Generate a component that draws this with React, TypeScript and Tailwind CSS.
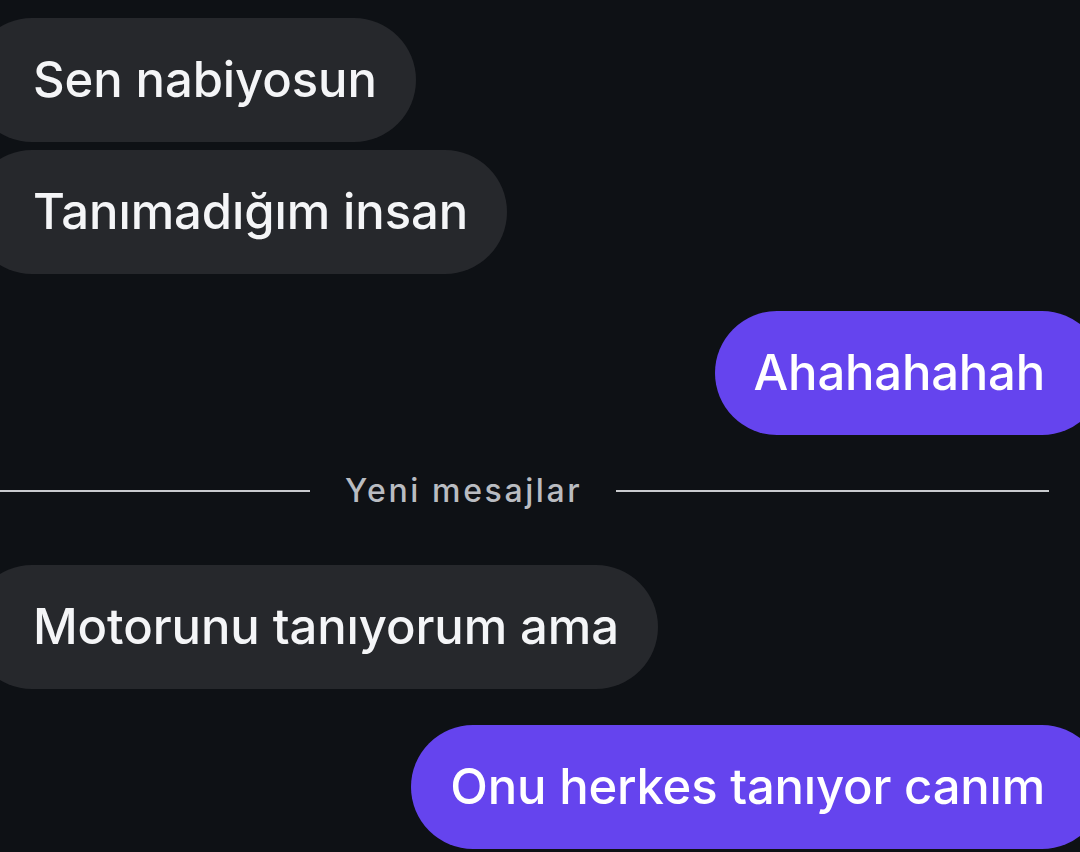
import React from 'react'

type Msg = { id: number; text: string; mine: boolean }

const before: Msg[] = [
  { id: 1, text: 'Sen nabiyosun', mine: false },
  { id: 2, text: 'Tanımadığım insan', mine: false },
  { id: 3, text: 'Ahahahahah', mine: true },
]

const after: Msg[] = [
  { id: 4, text: 'Motorunu tanıyorum ama', mine: false },
  { id: 5, text: 'Onu herkes tanıyor canım', mine: true },
]

function Bubble({ msg }: { msg: Msg }) {
  if (msg.mine) {
    return (
      <div className="flex justify-end">
        <div className="-mr-[24px] flex h-[124px] items-center rounded-full bg-[#6544ee] pl-[39px] pr-[59px] text-[49px] font-medium tracking-[-0.2px] text-white">
          {msg.text}
        </div>
      </div>
    )
  }
  return (
    <div className="flex justify-start">
      <div className="-ml-[30px] flex h-[124px] items-center rounded-full bg-[#26282c] pl-[63px] pr-[39px] text-[49px] font-medium tracking-[-0.1px] text-[#f4f5f7]">
        {msg.text}
      </div>
    </div>
  )
}

export default function App() {
  return (
    <div
      className="h-[852px] w-[1080px] overflow-hidden bg-[#0e1115]"
      style={{ fontFamily: 'Inter, "Noto Sans", sans-serif' }}
    >
      <div className="flex flex-col pt-[18px]">
        <Bubble msg={before[0]} />
        <div className="mt-[8px]">
          <Bubble msg={before[1]} />
        </div>
        <div className="mt-[37px]">
          <Bubble msg={before[2]} />
        </div>

        {/* New messages divider */}
        <div className="mb-[58px] mt-[40px] flex h-[32px] items-center">
          <div className="h-[2px] w-[310px] bg-[#c9cbce]" />
          <span className="ml-[35px] text-[32px] font-medium tracking-[2.6px] text-[#b9bcc1]">Yeni mesajlar</span>
          <div className="ml-[34px] h-[2px] w-[433px] bg-[#c9cbce]" />
        </div>

        <Bubble msg={after[0]} />
        <div className="mt-[36px]">
          <Bubble msg={after[1]} />
        </div>
      </div>
    </div>
  )
}
